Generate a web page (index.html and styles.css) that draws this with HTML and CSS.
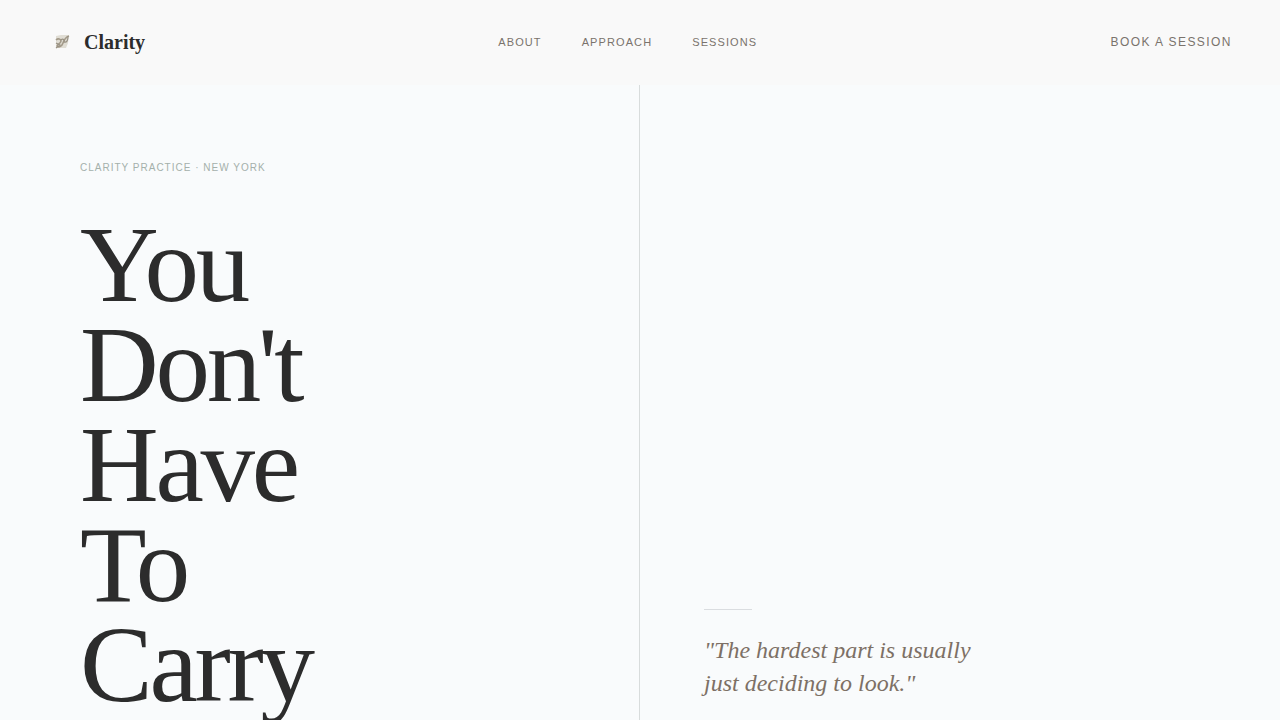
FILE: index.html
```html
<!DOCTYPE html>
<html lang="en">
<head>
<meta charset="utf-8">
<title>Clarity</title>
<link rel="stylesheet" href="styles.css">
</head>
<body>
<header class="header">
  <a class="brand" href="#">
    <svg class="logo" viewBox="0 0 28 28" aria-hidden="true">
      <path d="M8 8l5-1 8 0-1 8-2 5H9l-1-3z" fill="#e0ddd4"/>
      <path d="M8 12c2-2 5-1 5 1s-3 3-4 5c2 2 5 0 6-3s3-6 6-7" fill="none" stroke="#a39a89" stroke-width="1.6"/>
      <path d="M13 12c2-2 4 0 3 2 3 1 4-2 4-6M8 15l4 2-4 3" fill="none" stroke="#989184" stroke-width="1.2"/>
    </svg>
    <span class="brand-name">Clarity</span>
  </a>
  <nav class="nav">
    <a href="#about">About</a>
    <a href="#approach">Approach</a>
    <a href="#sessions">Sessions</a>
  </nav>
  <a class="book" href="#book">Book a session</a>
</header>
<main class="hero">
  <section class="intro">
    <p class="eyebrow">Clarity Practice · New York</p>
    <h1 class="title">You<br>Don't<br>Have<br>To<br>Carry</h1>
  </section>
  <aside class="aside">
    <blockquote class="quote">"The hardest part is usually just deciding to look."</blockquote>
  </aside>
</main>
</body>
</html>
```

FILE: styles.css
```css
* { box-sizing: border-box; margin: 0; }
body {
  min-height: 100vh;
  display: flex;
  flex-direction: column;
  background: #f9fbfc;
  color: #2c2c2c;
  font-family: "Liberation Sans", Arial, sans-serif;
}
a { color: inherit; text-decoration: none; }
.header {
  display: flex;
  justify-content: space-between;
  align-items: center;
  padding: 28px 48px;
  border-bottom: 1px solid #f9f9f9;
  background: #f9f9f9;
}
.brand { display: flex; align-items: center; gap: 8px; }
.logo { width: 28px; height: 28px; }
.brand-name { font: bold 20px/28px "Liberation Serif", serif; }
.nav { display: flex; gap: 40px; color: #7a736c; font-size: 11px; letter-spacing: 0.1em; text-transform: uppercase; }
.book { color: #7a736c; font-size: 12px; letter-spacing: 0.12em; text-transform: uppercase; }
.hero { flex: 1; display: grid; grid-template-columns: 1fr 1fr; }
.intro { border-right: 1px solid #d8dcdc; padding: 76px 80px 0; }
.eyebrow { color: #a4b0ab; font-size: 10px; line-height: 14px; letter-spacing: 1px; text-transform: uppercase; }
.title { margin-top: 40px; font: 400 109px/100px "Liberation Serif", serif; letter-spacing: -0.03em; }
.aside { display: flex; flex-direction: column; justify-content: flex-end; padding: 0 64px 20px; }
.quote { max-width: 280px; color: #7d7065; font: italic 24px/33px "Liberation Serif", serif; }
.quote::before { content: ""; display: block; width: 48px; height: 1px; margin-bottom: 24px; background: #dadde0; }
```
